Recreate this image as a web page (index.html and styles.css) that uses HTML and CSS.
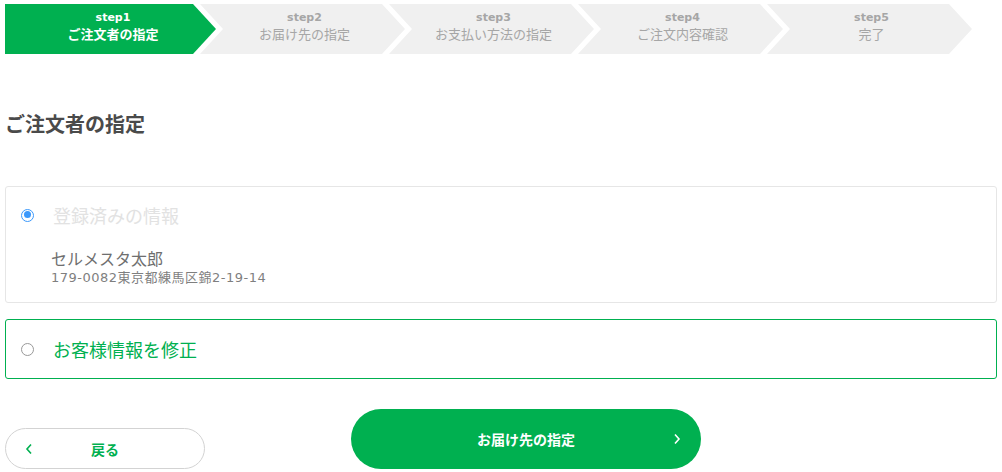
FILE: index.html
```html
<!DOCTYPE html>
<html lang="ja">
<head>
    <meta charset="UTF-8">
    <meta name="viewport" content="width=device-width, initial-scale=1.0">
    <title>ご注文者の指定</title>
    <link rel="stylesheet" href="styles.css">
</head>
<body>
    <ol class="steps">
        <li class="step active">
            <span class="step-no">step1</span>
            <span class="step-name">ご注文者の指定</span>
        </li>
        <li class="step">
            <span class="step-no">step2</span>
            <span class="step-name">お届け先の指定</span>
        </li>
        <li class="step">
            <span class="step-no">step3</span>
            <span class="step-name">お支払い方法の指定</span>
        </li>
        <li class="step">
            <span class="step-no">step4</span>
            <span class="step-name">ご注文内容確認</span>
        </li>
        <li class="step">
            <span class="step-no">step5</span>
            <span class="step-name">完了</span>
        </li>
    </ol>

    <h2 class="title">ご注文者の指定</h2>

    <div class="option registered">
        <div class="option-row">
            <span class="radio checked"></span>
            <span class="option-label">登録済みの情報</span>
        </div>
        <div class="customer">
            <p class="customer-name">セルメスタ太郎</p>
            <p class="customer-address">179-0082東京都練馬区錦2-19-14</p>
        </div>
    </div>

    <div class="option edit">
        <div class="option-row">
            <span class="radio"></span>
            <span class="option-label">お客様情報を修正</span>
        </div>
    </div>

    <div class="actions">
        <button class="btn-back">
            <svg class="chev" width="8" height="12" viewBox="0 0 8 12"><path d="M6 1.5 L2 6 L6 10.5" fill="none" stroke="#00b050" stroke-width="1.6"/></svg>
            <span>戻る</span>
        </button>
        <button class="btn-next">
            <span>お届け先の指定</span>
            <svg class="chev" width="8" height="12" viewBox="0 0 8 12"><path d="M2 1.5 L6 6 L2 10.5" fill="none" stroke="#fff" stroke-width="1.6"/></svg>
        </button>
    </div>
</body>
</html>
```

FILE: styles.css
```css
* {
    margin: 0;
    padding: 0;
    box-sizing: border-box;
}

body {
    font-family: "DejaVu Sans", "Noto Sans CJK JP", sans-serif;
    background: #fff;
    color: #555;
    padding: 4px 5px 0;
    width: 1002px;
}

/* ステップ表示 */
.steps {
    list-style: none;
    display: flex;
    height: 50px;
}

.step {
    width: 211px;
    height: 50px;
    margin-left: -22px;
    padding: 0 0 4px 10px;
    background: #f0f0f0;
    color: #a6a6a6;
    display: flex;
    flex-direction: column;
    align-items: center;
    justify-content: center;
    clip-path: polygon(6px 0, calc(100% - 23px) 0, 100% 50%, calc(100% - 23px) 100%, 6px 100%, 29px 50%);
}

.step:first-child {
    margin-left: 0;
    padding-left: 5px;
    clip-path: polygon(0 0, calc(100% - 23px) 0, 100% 50%, calc(100% - 23px) 100%, 0 100%);
}

.step-no {
    font-size: 11px;
    font-weight: bold;
    line-height: 14px;
}

.step-name {
    font-family: "Noto Sans CJK JP", sans-serif;
    font-size: 13px;
    line-height: 18px;
}

.step.active {
    background: #00b050;
    color: #fff;
}

.step.active .step-name {
    font-weight: bold;
}

.title {
    font-family: "Noto Sans CJK JP", sans-serif;
    font-size: 20px;
    line-height: 26px;
    font-weight: bold;
    color: #4a4a4a;
    margin-top: 57px;
    margin-bottom: 49px;
}

/* 選択肢 */
.option {
    border: 1px solid #e6e6e6;
    border-radius: 3px;
    width: 992px;
}

.option-row {
    display: flex;
    align-items: center;
    gap: 19px;
}

.radio {
    width: 13px;
    height: 13px;
    border: 1.5px solid #999;
    border-radius: 50%;
    flex-shrink: 0;
    position: relative;
}

.radio.checked {
    border-color: #3c99fb;
}

.radio.checked::after {
    content: "";
    position: absolute;
    left: 1.5px;
    top: 1.5px;
    width: 7px;
    height: 7px;
    border-radius: 50%;
    background: #3c99fb;
}

.option-label {
    font-family: "Noto Sans CJK JP", sans-serif;
    font-size: 18px;
    line-height: 24px;
}

.registered {
    padding: 16px 15px 15px;
}

.registered .option-label {
    color: #e2e2e2;
}

.customer {
    padding-left: 30px;
    margin-top: 20px;
    color: #6f6f6f;
}

.customer-name {
    font-family: "Noto Sans CJK JP", sans-serif;
    font-size: 16px;
    line-height: 22px;
}

.customer-address {
    font-size: 13px;
    line-height: 18px;
    letter-spacing: 0.5px;
    color: #7f7f7f;
}

.edit {
    margin-top: 16px;
    height: 60px;
    padding: 0 15px;
    display: flex;
    align-items: center;
    border-color: #00b050;
}

.edit .option-label {
    color: #00b050;
}

/* ボタン */
.actions {
    display: flex;
    align-items: flex-end;
    margin-top: 30px;
    gap: 146px;
}

button {
    font-family: "Noto Sans CJK JP", sans-serif;
    font-weight: bold;
    font-size: 14px;
    cursor: pointer;
    display: flex;
    align-items: center;
    position: relative;
    justify-content: center;
}

.btn-back {
    width: 200px;
    height: 41px;
    border: 1px solid #d3d3d3;
    border-radius: 21px;
    background: #fff;
    color: #00b050;
}

.btn-next {
    width: 350px;
    height: 60px;
    border: none;
    border-radius: 30px;
    background: #00b050;
    color: #fff;
}

.chev {
    position: absolute;
    top: 50%;
    margin-top: -6px;
}

.btn-back .chev {
    left: 19px;
}

.btn-next .chev {
    right: 20px;
}
```
